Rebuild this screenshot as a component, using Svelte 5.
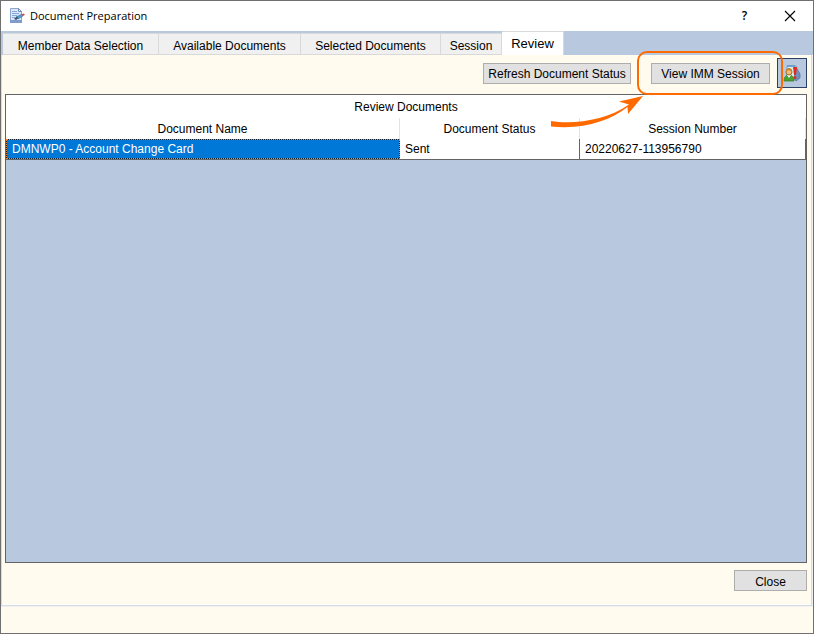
<script>
  const tabs = [
    { label: 'Member Data Selection', width: 156 },
    { label: 'Available Documents', width: 142 },
    { label: 'Selected Documents', width: 140 },
    { label: 'Session', width: 61 },
    { label: 'Review', width: 62 }
  ];
  let active = $state('Review');
  const rows = [
    { name: 'DMNWP0 - Account Change Card', status: 'Sent', session: '20220627-113956790' }
  ];
</script>

<main class="window">
  <header class="titlebar">
    <svg class="app-icon" width="16" height="16" viewBox="0 0 16 16" aria-hidden="true">
      <path d="M1.5.5h8l3 3v11h-11z" fill="#dbe8f8" stroke="#8fa6cc" />
      <path d="M9.500.5v3h3z" fill="#fff" stroke="#7189b4" />
      <path d="M3 3.500h5M3 5.500h7M3 7.500h5M3 9.500h3" stroke="#86a8da" />
      <path d="M1 12h12v3H1z" fill="#7f9ccb" />
      <path d="M5 11l3-3 2 2-3 2z" fill="#3f5270" />
      <path d="M8 8.500l5-2.500 1 2-5 3z" fill="#4fa0cf" stroke="#365f8d" stroke-width=".5" />
      <path d="M13 6l2-.5.8 1.500-2 1z" fill="#d5453a" />
    </svg>
    <h1>Document Preparation</h1>
    <button class="caption-btn help" aria-label="Help">?</button>
    <button class="caption-btn" aria-label="Close window">
      <svg width="12" height="12" viewBox="0 0 12 12" aria-hidden="true">
        <path d="M1 1l10 10M11 1L1 11" stroke="#000" stroke-width="1.1" />
      </svg>
    </button>
  </header>

  <div class="tabs" role="tablist">
    {#each tabs as tab}
      <button
        role="tab"
        class="tab"
        class:active={active === tab.label}
        aria-selected={active === tab.label}
        style:width="{tab.width}px"
        onclick={() => (active = tab.label)}>{tab.label}</button>
    {/each}
  </div>

  <section class="panel">
    <div class="toolbar">
      <button class="btn refresh">Refresh Document Status</button>
      <button class="btn view">View IMM Session</button>
      <button class="icon-btn" aria-label="Document recipients">
        <svg width="18" height="18" viewBox="0 0 18 18" aria-hidden="true">
          <path d="M4 2h9v13H4z" fill="#d9ecf8" stroke="#6aa5cf" />
          <path d="M5 1v2M7 1v2M9 1v2M11 1v2" stroke="#4785b5" />
          <path d="M13 3l4 7v4l-4 3-2-3z" fill="#6f93bd" stroke="#4c6f9c" stroke-width=".7" />
          <path d="M10 3h4l-1 8h-2z" fill="#e32a20" />
          <circle cx="12" cy="13.500" r="1.500" fill="#e32a20" />
          <path d="M1 17c0-4 2-6 5-6s5 2 5 6z" fill="#4ba32f" stroke="#34771f" stroke-width=".7" />
          <path d="M4 11l2 3 2-3z" fill="#fff" />
          <circle cx="6" cy="8" r="3" fill="#f1bf6d" stroke="#a36b23" />
          <path d="M3 7c0-4 6-4 6 0-2 0-3-1-3-1z" fill="#c68125" />
        </svg>
      </button>
      <div class="callout"></div>
      <svg class="arrow" width="94" height="34" viewBox="0 0 94 34" aria-hidden="true">
        <path
          d="M1 27C24 31 57 26 79 10.500L69 7.500L93 2L78 20L77.500 13C60 27 32 36 1 32.500Z"
          fill="#ff6a00" />
      </svg>
    </div>

    <div class="grid">
      <table>
        <caption>Review Documents</caption>
        <colgroup>
          <col class="c-name" />
          <col class="c-status" />
          <col />
        </colgroup>
        <thead>
          <tr><th>Document Name</th><th>Document Status</th><th>Session Number</th></tr>
        </thead>
        <tbody>
          {#each rows as row}
            <tr>
              <td class="selected"><span>{row.name}</span></td>
              <td>{row.status}</td>
              <td>{row.session}</td>
            </tr>
          {/each}
        </tbody>
      </table>
    </div>

    <footer>
      <button class="btn close">Close</button>
    </footer>
  </section>
</main>

<style>
  :global(body) {
    margin: 0;
  }
  * {
    box-sizing: border-box;
  }
  button {
    margin: 0;
    padding: 0;
    font: inherit;
    color: inherit;
    border-radius: 0;
    white-space: nowrap;
  }
  .window {
    display: flex;
    flex-direction: column;
    min-height: 100vh;
    padding-bottom: 27px;
    border: 1px solid #707070;
    background: #fffbef;
    color: #000;
    font: 12px/16px "Liberation Sans", Arial, sans-serif;
  }
  .titlebar {
    display: flex;
    align-items: center;
    height: 30px;
    padding: 0 1px 0 8px;
    background: #fff;
    font-family: "Open Sans", "Noto Sans", sans-serif;
  }
  .app-icon {
    margin-right: 5px;
  }
  h1 {
    flex: 1;
    margin: 0;
    font: inherit;
    font-size: 11px;
  }
  .caption-btn {
    display: grid;
    place-items: center;
    width: 45px;
    height: 28px;
    border: 0;
    background: none;
  }
  .help {
    font-weight: 600;
  }
  .tabs {
    display: flex;
    align-items: flex-end;
    height: 24px;
    padding-left: 2px;
    background: #b8c8df;
  }
  .tab {
    height: 22px;
    padding-top: 4px;
    border: solid #d9d9d9;
    border-width: 1px 1px 1px 0;
    background: #f0f0f0;
  }
  .tab.active {
    height: 24px;
    padding-top: 0;
    border-bottom: 0;
    background: #fff;
    font-size: 13px;
  }
  .panel {
    flex: 1;
    display: flex;
    flex-direction: column;
    margin-right: 1px;
    padding: 0 4px 0 3px;
    border: solid #d9dbe3;
    border-width: 0 1px 1px;
    box-shadow: inset 0 -1px #fff, 0 1px #f0f0f0, 1px 1px #f0f0f0;
  }
  .toolbar {
    position: relative;
    display: flex;
    justify-content: flex-end;
    align-items: center;
    padding: 3px 0 6px;
  }
  .btn {
    height: 21px;
    padding-top: 2px;
    border: 1px solid #adadad;
    background: #e1e1e1;
  }
  .refresh {
    width: 148px;
    margin-right: 20px;
  }
  .view {
    width: 119px;
    margin-right: 7px;
  }
  .icon-btn {
    display: grid;
    place-items: center;
    width: 30px;
    height: 30px;
    border: 1px solid #2c3f64;
    background: #b8c8df;
  }
  .callout {
    position: absolute;
    top: -4px;
    right: 24px;
    width: 146px;
    height: 44px;
    border: 2px solid #ff6a00;
    border-radius: 10px;
    pointer-events: none;
  }
  .arrow {
    position: absolute;
    top: 39px;
    right: 163px;
    pointer-events: none;
  }
  .grid {
    flex: 1;
    border: 1px solid #646464;
    background: #b8c8df;
  }
  table {
    width: 100%;
    table-layout: fixed;
    border-collapse: separate;
    border-spacing: 0;
    background: #fff;
  }
  caption {
    height: 23px;
    padding-top: 4px;
    background: #fff;
  }
  .c-name {
    width: 394px;
  }
  .c-status {
    width: 180px;
  }
  th {
    height: 21px;
    padding: 1px 0 0;
    border-right: 1px solid #e3e3e3;
    font-weight: normal;
  }
  td {
    height: 21px;
    padding: 0 5px;
    border-right: 1px solid #646464;
    border-bottom: 1px solid #646464;
  }
  td.selected {
    padding: 0;
    border-right: 0;
    color: #fff;
  }
  .selected span {
    display: block;
    height: 20px;
    padding: 1px 5px;
    border: 1px dotted #ff8728;
    background:
      linear-gradient(#0078d7, #0078d7) padding-box,
      linear-gradient(#102030, #102030) border-box;
  }
  footer {
    display: flex;
    justify-content: flex-end;
    padding: 7px 0 14px;
  }
  .close {
    width: 73px;
    height: 21px;
  }
</style>
